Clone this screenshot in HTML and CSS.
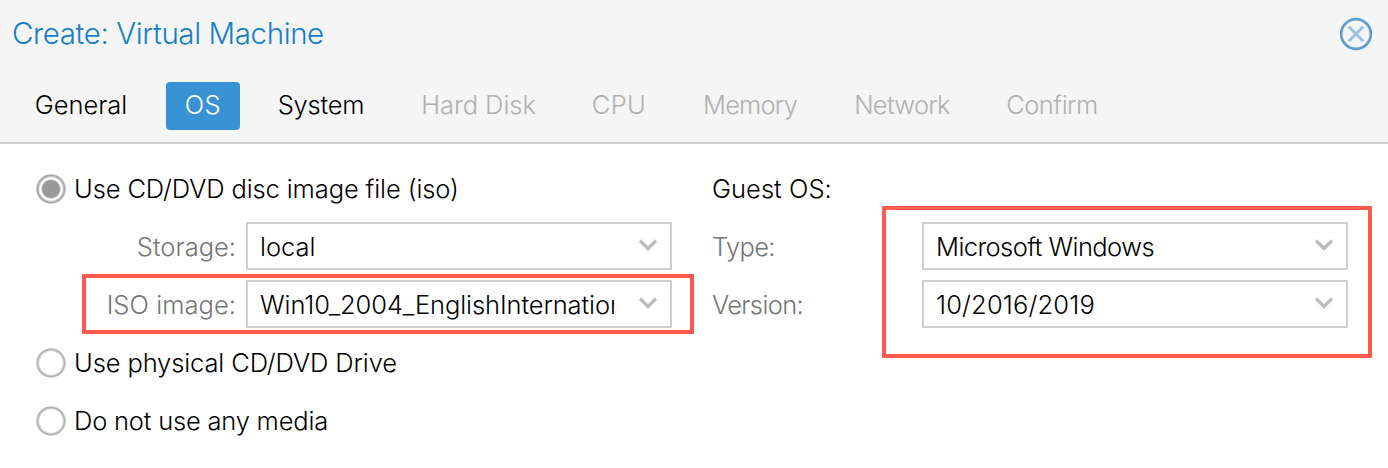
FILE: index.html
```
<!DOCTYPE html>
<html lang="en">
<head>
<meta charset="utf-8">
<title>Create: Virtual Machine</title>
<link rel="stylesheet" href="styles.css">
</head>
<body>
<div class="dialog">
  <header class="header">
    <div class="titlebar">
      <h1 class="title">Create: Virtual Machine</h1>
      <svg class="close" width="34" height="34" viewBox="0 0 34 34" fill="none">
        <circle cx="17" cy="17" r="14.8" stroke="#5f9ed3" stroke-width="2.7"/>
        <path d="M9.8 9.8 24.2 24.2M24.2 9.8 9.8 24.2" stroke="#9cc0e7" stroke-width="3"/>
      </svg>
    </div>
    <nav class="tabs">
      <span class="tab general">General</span>
      <span class="tab active">OS</span>
      <span class="tab system">System</span>
      <span class="tab disabled disk">Hard Disk</span>
      <span class="tab disabled cpu">CPU</span>
      <span class="tab disabled memory">Memory</span>
      <span class="tab disabled network">Network</span>
      <span class="tab disabled confirm">Confirm</span>
    </nav>
  </header>
  <main class="panel">
    <section class="column media">
      <div class="option"><span class="radio checked"></span><span>Use CD/DVD disc image file (iso)</span></div>
      <div class="row">
        <span class="label">Storage:</span>
        <div class="field"><span class="value">local</span><svg class="arrow" width="20" height="14" viewBox="0 0 20 14" fill="none"><path d="M2 2.5 10 10.5 18 2.5" stroke="#bcbcbc" stroke-width="3.4"/></svg></div>
      </div>
      <div class="row">
        <span class="label wide">ISO image:</span>
        <div class="field"><span class="value iso">Win10_2004_EnglishInternational</span><svg class="arrow" width="20" height="14" viewBox="0 0 20 14" fill="none"><path d="M2 2.5 10 10.5 18 2.5" stroke="#bcbcbc" stroke-width="3.4"/></svg></div>
        <div class="highlight"></div>
      </div>
      <div class="option"><span class="radio"></span><span>Use physical CD/DVD Drive</span></div>
      <div class="option last"><span class="radio"></span><span>Do not use any media</span></div>
    </section>
    <section class="column guest">
      <div class="heading">Guest OS:</div>
      <div class="row">
        <span class="label tight">Type:</span>
        <div class="field"><span class="value windows">Microsoft Windows</span><svg class="arrow" width="20" height="14" viewBox="0 0 20 14" fill="none"><path d="M2 2.5 10 10.5 18 2.5" stroke="#bcbcbc" stroke-width="3.4"/></svg></div>
        <div class="highlight"></div>
      </div>
      <div class="row">
        <span class="label tight">Version:</span>
        <div class="field"><span class="value version">10/2016/2019</span><svg class="arrow" width="20" height="14" viewBox="0 0 20 14" fill="none"><path d="M2 2.5 10 10.5 18 2.5" stroke="#bcbcbc" stroke-width="3.4"/></svg></div>
      </div>
    </section>
  </main>
</div>
</body>
</html>
```

FILE: styles.css
```
* { box-sizing: border-box; }

body {
  margin: 0;
  background: #fff;
  color: #000;
  font: 300 25.5px/50px Inter, "Liberation Sans", sans-serif;
  white-space: nowrap;
}

.dialog { height: 468px; overflow: hidden; }

.header {
  height: 144px;
  background: #f5f5f5;
  border-bottom: 2px solid #cfcfcf;
}

.titlebar {
  display: flex;
  justify-content: space-between;
  align-items: center;
  height: 68px;
  padding: 0 15px 0 12px;
}

.title {
  margin: 0 0 2px;
  color: #157fcc;
  font-size: 29.5px;
  font-weight: 300;
  letter-spacing: -0.39px;
}

.close { display: block; }

.tabs {
  display: flex;
  gap: 20px;
  padding: 14px 16px 0;
}

.tab {
  height: 48px;
  line-height: 46px;
  border-radius: 4px;
  text-align: center;
}

.active { width: 74px; background: #3892d4; color: #fff; letter-spacing: 0.6px; }
.disabled { color: #b1b1b1; }
.general { width: 130px; }
.system { width: 122px; letter-spacing: -0.2px; }
.disk { width: 153px; letter-spacing: -0.05px; }
.cpu { width: 88px; letter-spacing: 0.4px; }
.memory { width: 134px; letter-spacing: -0.8px; }
.network { width: 130px; letter-spacing: -0.7px; }
.confirm { width: 130px; letter-spacing: -0.5px; }

.panel {
  display: flex;
  gap: 40px;
  padding: 20px 40px 0 36px;
}

.column {
  display: flex;
  flex-direction: column;
  gap: 10px;
}

.media { width: 636px; }
.guest { width: 636px; }

.option {
  display: flex;
  align-items: center;
  gap: 8px;
  height: 50px;
  margin-bottom: -2px;
  letter-spacing: -0.12px;
}

.last { letter-spacing: -0.2px; }

.radio {
  width: 30px;
  height: 30px;
  border-radius: 50%;
  background: radial-gradient(circle closest-side, #fff 11.2px, #b4b4b4 13.2px, #b4b4b4 14px, #e4e4e4 15px);
}

.checked {
  background: radial-gradient(circle closest-side, #999 8.3px, #fff 10.2px, #fff 11px, #aaa 13.2px, #aaa 14px, #ddd 15px);
}

.heading { height: 48px; letter-spacing: 0.05px; }

.row {
  position: relative;
  display: flex;
  height: 48px;
}

.label { color: #767676; }
.media .label { width: 200px; margin-right: 10px; text-align: right; }
.guest .label { width: 210px; }
.wide { letter-spacing: 0.05px; }
.tight { letter-spacing: -0.65px; }

.field {
  display: flex;
  width: 426px;
  height: 48px;
  padding: 0 12px;
  border: 2px solid #cfcfcf;
  justify-content: space-between;
}

.value {
  width: 354px;
  height: 44px;
  line-height: 46px;
  overflow: hidden;
}

.iso { letter-spacing: -0.1px; }
.windows { letter-spacing: -0.58px; }
.version { letter-spacing: 0.15px; }
.arrow { margin-top: 14px; }

.highlight {
  position: absolute;
  border: 4px solid #ff5b4f;
}

.media .highlight { left: 46px; top: -6px; width: 612px; height: 60px; }
.guest .highlight { left: 170px; top: -16px; width: 490px; height: 152px; }
```
